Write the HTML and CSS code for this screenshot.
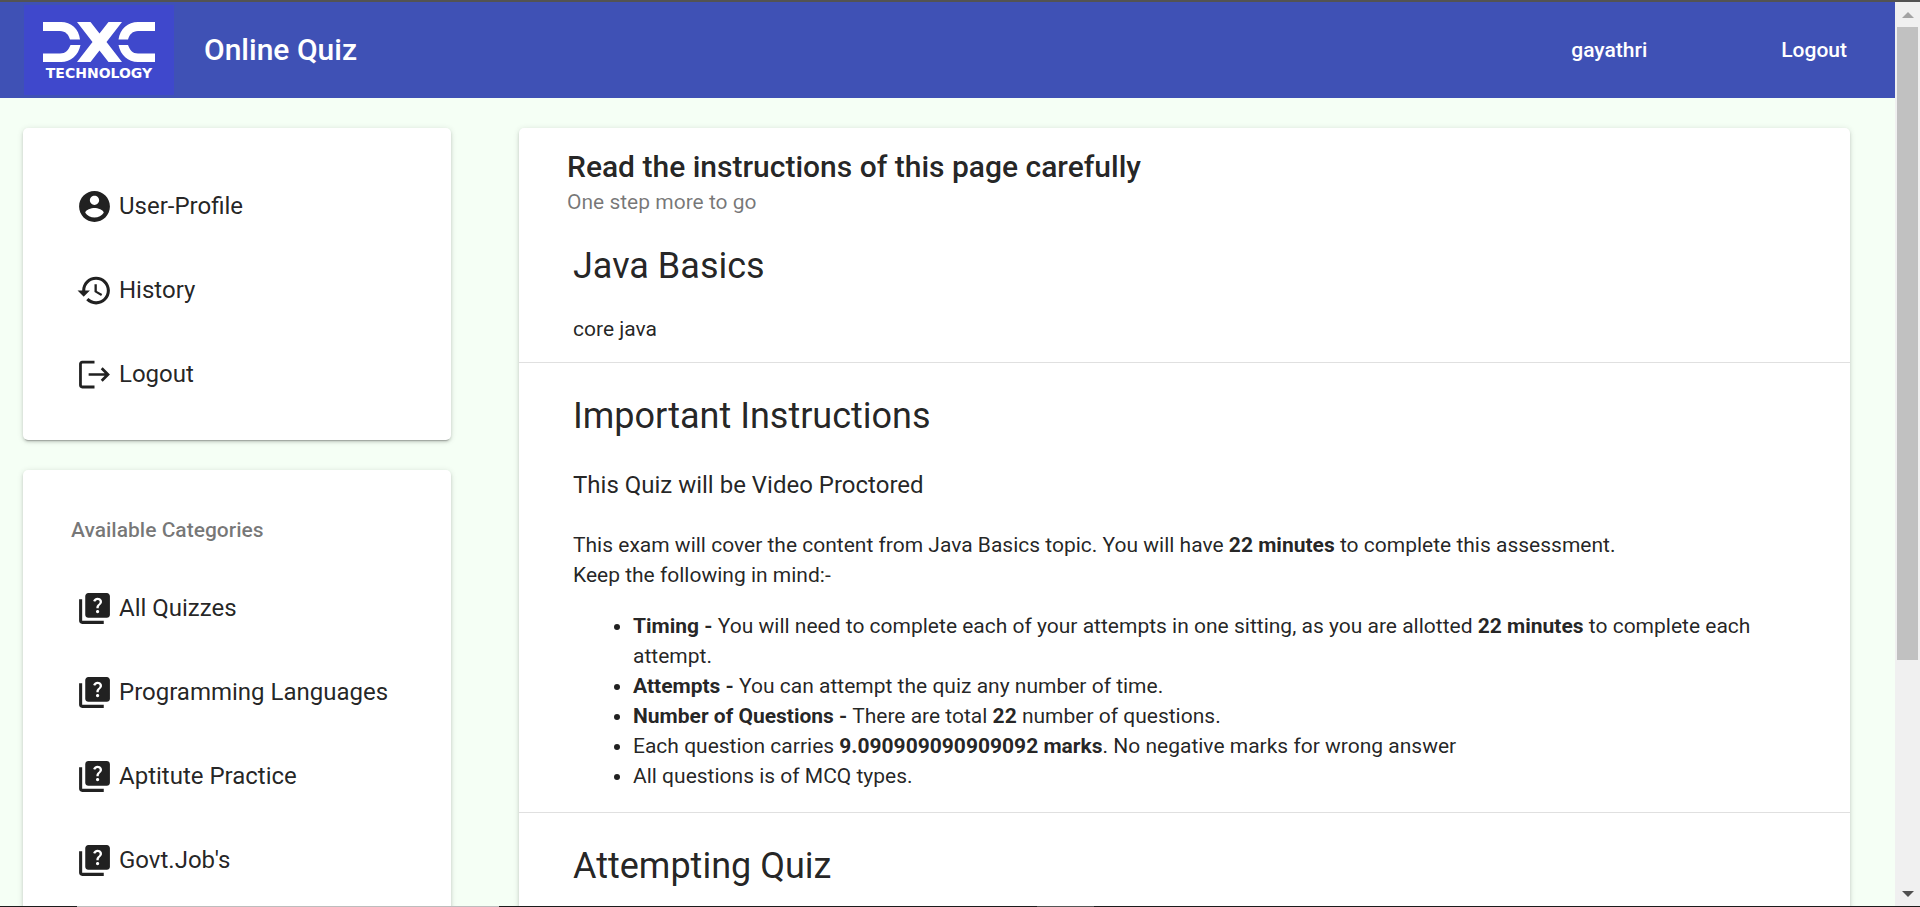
FILE: index.html
```html
<!DOCTYPE html>
<html lang="en">
<head>
<meta charset="utf-8">
<title>Online Quiz</title>
<link rel="stylesheet" href="styles.css">
</head>
<body>
<svg class="sprite" aria-hidden="true">
  <symbol id="i-account" viewBox="0 0 24 24"><path d="M12 2C6.48 2 2 6.48 2 12s4.48 10 10 10 10-4.480 10-10S17.520 2 12 2zm0 3c1.660 0 3 1.340 3 3s-1.340 3-3 3-3-1.340-3-3 1.340-3 3-3zm0 14.200c-2.500 0-4.710-1.280-6-3.220.030-1.990 4-3.080 6-3.080 1.990 0 5.970 1.090 6 3.080-1.290 1.940-3.500 3.220-6 3.220z"/></symbol>
  <symbol id="i-history" viewBox="0 0 24 24"><path d="M13 3c-4.970 0-9 4.030-9 9H1l3.890 3.890.070.140L9 12H6c0-3.870 3.130-7 7-7s7 3.130 7 7-3.130 7-7 7c-1.930 0-3.680-.790-4.940-2.060l-1.420 1.420C8.270 19.990 10.510 21 13 21c4.970 0 9-4.030 9-9s-4.030-9-9-9zm-1 5v5l4.280 2.540.720-1.210-3.500-2.080V8H12z"/></symbol>
  <symbol id="i-logout" viewBox="0 0 24 24"><path d="M12 3v1.800H4.200c-.200 0-.400.200-.400.400v13.600c0 .200.200.400.400.400H12V21H4c-1.100 0-2-.9-2-2V5c0-1.100.9-2 2-2zM17.300 7.300 22 12l-4.700 4.700-1.250-1.250 2.550-2.600H8.200v-1.700h10.400L16.050 8.550z"/></symbol>
  <symbol id="i-quiz" viewBox="0 0 24 24"><path d="M4 6H2v14c0 1.100.9 2 2 2h14v-2H4V6zm16-4H8c-1.100 0-2 .9-2 2v12c0 1.100.9 2 2 2h12c1.100 0 2-.9 2-2V4c0-1.100-.9-2-2-2zm-5.990 13c-.590 0-1.050-.470-1.050-1.050 0-.590.470-1.040 1.050-1.040.590 0 1.040.450 1.040 1.040-.010.580-.450 1.050-1.040 1.050zm2.500-6.170c-.630.930-1.230 1.210-1.560 1.810-.130.240-.180.400-.180 1.180h-1.520c0-.410-.060-1.080.260-1.650.410-.730 1.180-1.160 1.630-1.800.480-.680.210-1.940-1.140-1.940-.880 0-1.320.670-1.500 1.230l-1.370-.570C11.510 5.960 12.520 5 13.990 5c1.230 0 2.080.560 2.510 1.260.370.600.580 1.730.010 2.570z"/></symbol>
</svg>

<div class="window">
  <div class="page">
    <header class="toolbar">
      <svg class="logo" viewBox="0 0 150 90" role="img" aria-label="DXC Technology">
        <rect width="150" height="90" fill="#3f48cc"/>
        <g fill="#fff">
          <path d="M19 17h18c10 0 18 7 19 17.500H46C44.500 29.500 41.500 26 36 26H19zM19 57h18c10 0 17.500-7 19.500-17H46.500C44.500 45 41.500 48.500 36 48.500H19z"/>
          <path d="M53 17h13.500L75.500 28.500 84.500 17H98L82.500 37 98 57H84.500L75.500 45.500 66.500 57H53L68.500 37z"/>
          <path d="M131 17h-17c-10 0-18 7-19.500 17.500H104C105.500 29.500 108.500 26 114 26h17zM131 57h-17c-10 0-17.500-7-19.500-17H104C106 45 108.500 48.500 114 48.500h17z"/>
          <text x="75" y="73" text-anchor="middle" class="logo-text">TECHNOLOGY</text>
        </g>
      </svg>
      <h1 class="brand">Online Quiz</h1>
      <nav class="account">
        <a href="#profile">gayathri</a>
        <a href="#logout">Logout</a>
      </nav>
    </header>

    <div class="columns">
      <aside class="sidebar">
        <nav class="card menu">
          <a href="#profile"><svg class="icon"><use href="#i-account"/></svg>User-Profile</a>
          <a href="#history"><svg class="icon"><use href="#i-history"/></svg>History</a>
          <a href="#logout"><svg class="icon"><use href="#i-logout"/></svg>Logout</a>
        </nav>
        <nav class="card menu categories">
          <h2 class="menu-title">Available Categories</h2>
          <a href="#all"><svg class="icon"><use href="#i-quiz"/></svg>All Quizzes</a>
          <a href="#programming"><svg class="icon"><use href="#i-quiz"/></svg>Programming Languages</a>
          <a href="#aptitude"><svg class="icon"><use href="#i-quiz"/></svg>Aptitute Practice</a>
          <a href="#govt"><svg class="icon"><use href="#i-quiz"/></svg>Govt.Job's</a>
        </nav>
      </aside>

      <main class="card content">
        <div class="card-header">
          <h2 class="card-title">Read the instructions of this page carefully</h2>
          <p class="card-subtitle">One step more to go</p>
        </div>
        <section class="section first">
          <h2>Java Basics</h2>
          <p>core java</p>
        </section>
        <section class="section">
          <h2>Important Instructions</h2>
          <h3>This Quiz will be Video Proctored</h3>
          <p>This exam will cover the content from Java Basics topic. You will have <b>22 minutes</b> to complete this assessment.<br>Keep the following in mind:-</p>
          <ul>
            <li><b>Timing -</b> You will need to complete each of your attempts in one sitting, as you are allotted <b>22 minutes</b> to complete each attempt.</li>
            <li><b>Attempts -</b> You can attempt the quiz any number of time.</li>
            <li><b>Number of Questions -</b> There are total <b>22</b> number of questions.</li>
            <li>Each question carries <b>9.090909090909092 marks</b>. No negative marks for wrong answer</li>
            <li>All questions is of MCQ types.</li>
          </ul>
        </section>
        <section class="section">
          <h2>Attempting Quiz</h2>
        </section>
      </main>
    </div>
  </div>
  <div class="scrollbar" aria-hidden="true">
    <svg class="arrow up" viewBox="0 0 12 6"><path d="M0 6 6 0l6 6z"/></svg>
    <div class="track"><div class="thumb"></div></div>
    <svg class="arrow down" viewBox="0 0 12 6"><path d="M0 0h12L6 6z"/></svg>
  </div>
</div>
</body>
</html>
```
FILE: styles.css
```css
* {
  box-sizing: border-box;
}

body {
  margin: 0;
  overflow: hidden;
  background: #f5fff5;
  color: rgba(0, 0, 0, 0.87);
  font: 400 21px/30px Roboto, sans-serif;
}

h1, h2, h3, p, ul {
  margin: 0;
}

a {
  color: inherit;
  text-decoration: none;
}

.sprite {
  display: none;
}

/* Browser viewport: dark frame edge above, page and scrollbar side by side,
   and a one-pixel strip of the desktop showing along the bottom */
.window {
  display: flex;
  height: 100vh;
  padding-bottom: 1px;
  border-top: 2px solid #535353;
  background: linear-gradient(90deg, #1c1c1c 4%, #bdbdbd 4% 26%, #1c1c1c 26% 54%, #555 54% 57%, #1c1c1c 57%);
}

.page {
  display: flex;
  flex: 1;
  flex-direction: column;
  min-width: 0;
  overflow: hidden;
  background: #f5fff5;
}

.toolbar {
  display: flex;
  flex: none;
  align-items: center;
  height: 96px;
  padding: 0 48px 0 24px;
  background: #3f51b5;
  color: #fff;
  font-weight: 500;
}

.logo {
  width: 150px;
  height: 90px;
}

.logo-text {
  font: 700 14px "DejaVu Sans", sans-serif;
}

.brand {
  margin-left: 30px;
  font-size: 30px;
  font-weight: 500;
  line-height: 40px;
}

.account {
  display: flex;
  gap: 134px;
  margin-left: auto;
}

.columns {
  display: grid;
  flex: 1;
  grid-template-columns: 428fr 1331fr;
  gap: 68px;
  min-height: 0;
  padding: 30px 45px 0 23px;
}

.sidebar {
  display: flex;
  flex-direction: column;
  gap: 30px;
}

.card {
  border-radius: 5px;
  background: #fff;
  box-shadow: 0 3px 1px -2px rgba(0, 0, 0, 0.2), 0 2px 3px rgba(0, 0, 0, 0.14), 0 1px 6px rgba(0, 0, 0, 0.12);
}

.menu {
  padding: 36px 20px 24px 53px;
  font-size: 24px;
}

.menu a {
  display: flex;
  align-items: center;
  gap: 6px;
  height: 84px;
}

.categories {
  flex: none;
  padding: 45px 20px 32px 53px;
}

.menu-title {
  margin: 0 0 21px -5px;
  color: rgba(0, 0, 0, 0.54);
  font-size: 21px;
  font-weight: 500;
}

.icon {
  flex: none;
  width: 37px;
  height: 37px;
  fill: #212121;
}

.content {
  align-self: start;
}

.card-header {
  padding: 19px 48px 0;
}

.card-title {
  font-size: 30px;
  font-weight: 500;
  line-height: 40px;
}

.card-subtitle {
  color: rgba(0, 0, 0, 0.54);
}

.section {
  padding: 29px 54px 21px;
  border-top: 1px solid rgba(0, 0, 0, 0.12);
}

.section.first {
  padding: 25px 54px 18px;
  border-top: 0;
}

.section h2 {
  margin-bottom: 24px;
  font-size: 36px;
  font-weight: 400;
  line-height: 48px;
}

.section h3 {
  margin: 27px 0;
  font-size: 24px;
  font-weight: 400;
  line-height: 36px;
}

.section ul {
  margin-top: 21px;
  padding-left: 60px;
}

.scrollbar {
  display: flex;
  flex: none;
  flex-direction: column;
  align-items: center;
  width: 25px;
  background: #f0f0f0;
}

.arrow {
  flex: none;
  width: 12px;
  height: 6px;
  fill: #505050;
}

.up {
  margin: 10px 0 9px;
  fill: #a3a3a3;
}

.down {
  margin: 9px 0;
}

.track {
  flex: 1;
  width: 21px;
}

.thumb {
  height: 74%;
  background: #c1c1c1;
}
```
